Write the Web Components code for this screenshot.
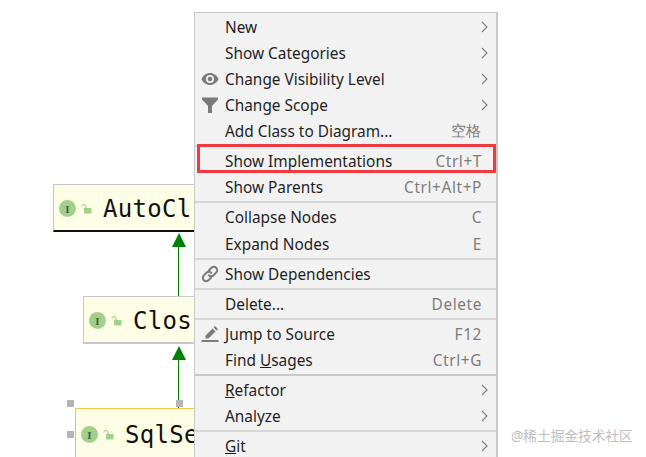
<!DOCTYPE html>
<html>
<head>
<meta charset="utf-8">
<style>
    html, body { margin: 0; padding: 0; background: #fff; }
    body { width: 646px; height: 457px; overflow: hidden; position: relative; }
</style>
</head>
<body>
<uml-diagram>
    <uml-node style="left:53px;top:184px;width:150px;height:48px" label="AutoCl" kind="top"></uml-node>
    <uml-arrow style="left:171px;top:233px;height:63px"></uml-arrow>
    <uml-node style="left:83px;top:296px;width:120px;height:48px" label="Clos"></uml-node>
    <uml-arrow style="left:171px;top:346px;height:62px"></uml-arrow>
    <uml-node style="left:75px;top:408px;width:130px;height:52px" label="SqlSe" kind="selected"></uml-node>
    <span class="handle" style="left:67px;top:400px"></span>
    <span class="handle" style="left:176px;top:400px"></span>
    <span class="handle" style="left:67px;top:431px"></span>
</uml-diagram>

<context-menu>
    <menu-item text="New" arrow></menu-item>
    <menu-item text="Show Categories" arrow></menu-item>
    <menu-item text="Change Visibility Level" icon="eye" arrow></menu-item>
    <menu-item text="Change Scope" icon="filter" arrow></menu-item>
    <menu-item text="Add Class to Diagram..." keys="空格"></menu-item>
    <menu-sep></menu-sep>
    <menu-item text="Show Implementations" keys="Ctrl+T" marked></menu-item>
    <menu-item text="Show Parents" keys="Ctrl+Alt+P"></menu-item>
    <menu-sep></menu-sep>
    <menu-item text="Collapse Nodes" keys="C" style="height:27px"></menu-item>
    <menu-item text="Expand Nodes" keys="E"></menu-item>
    <menu-sep></menu-sep>
    <menu-item text="Show Dependencies" icon="link"></menu-item>
    <menu-sep></menu-sep>
    <menu-item text="Delete..." keys="Delete"></menu-item>
    <menu-sep></menu-sep>
    <menu-item text="Jump to Source" icon="pencil" keys="F12"></menu-item>
    <menu-item keys="Ctrl+G">Find <u>U</u>sages</menu-item>
    <menu-sep style="background:#c8c8c8"></menu-sep>
    <menu-item arrow><u>R</u>efactor</menu-item>
    <menu-item text="Analyze" arrow></menu-item>
    <menu-sep></menu-sep>
    <menu-item arrow><u>G</u>it</menu-item>
</context-menu>

<water-mark>@稀土掘金技术社区</water-mark>

<script>
const ICONS = {
    eye: `<path fill-rule="evenodd" d="M9 3C5.100 3 1.900 5.400.5 9c1.400 3.600 4.600 6 8.500 6s7.100-2.400 8.500-6C16.100 5.400 12.900 3 9 3zm0 10a4 4 0 1 1 0-8 4 4 0 0 1 0 8z"/><circle cx="9" cy="9" r="2.300"/>`,
    filter: `<path d="M1 1.500h16v2L11 10v7H7v-7L1 3.500z"/>`,
    link: `<g fill="none" stroke="currentColor" stroke-width="2" stroke-linecap="round"><path d="M7.800 5.500 10.500 2.800a3.300 3.300 0 0 1 4.700 4.700L12.500 10.200a3.300 3.300 0 0 1-4.700 0"/><path d="M10.200 12.500 7.500 15.200a3.300 3.300 0 0 1-4.700-4.700L5.500 7.800a3.300 3.300 0 0 1 4.700 0"/></g>`,
    pencil: `<path d="M4.500 10.500 11.500 3.500l3 3L7.500 13.500h-3zM12.500 2.500l1.500-1.500 3 3-1.500 1.500z"/><rect x="0.500" y="15" width="17" height="2"/>`
};

customElements.define('uml-diagram', class UmlDiagram extends HTMLElement {
    constructor() {
        super();
        this.attachShadow({ mode: "open" });
        this.shadowRoot.innerHTML = `
            <style>
                :host { display: block; position: absolute; inset: 0; }
                ::slotted(.handle) { position: absolute; width: 7px; height: 7px; background: #b4b4b4; }
            </style>
            <slot></slot>
        `;
    }
});

customElements.define('uml-node', class UmlNode extends HTMLElement {
    constructor() {
        super();
        this.attachShadow({ mode: "open" });
    }

    connectedCallback() {
        const label = this.getAttribute('label');
        this.shadowRoot.innerHTML = `
            <style>
                :host {
                    display: flex;
                    position: absolute;
                    box-sizing: border-box;
                    align-items: center;
                    gap: 6px;
                    padding: 2px 0 0 5px;
                    background: #fefee6;
                    border: 1px solid #c8c8c8;
                    border-width: 1px 2px 2px 1px;
                    overflow: hidden;
                    font: 24px "DejaVu Sans Mono", monospace;
                    letter-spacing: .3px;
                    color: #111;
                }
                :host([kind="top"]) { border-bottom: 2px solid #111; }
                :host([kind="selected"]) { border: 1px solid #e8c84a; border-bottom: 0; padding-top: 0; }
                .badge {
                    display: flex;
                    flex: none;
                    align-items: center;
                    justify-content: center;
                    width: 17px;
                    height: 17px;
                    border-radius: 50%;
                    background: #a3cf8c;
                    color: #3f5f35;
                    font: bold 11px "Liberation Serif", serif;
                    letter-spacing: 0;
                }
                svg { flex: none; margin-left: -1px; }
                .label { white-space: nowrap; margin-left: 5px; }
            </style>
            <span class="badge">I</span>
            <svg width="11" height="11" viewBox="0 0 11 11"><path d="M4 5V3a2 2 0 0 0-4 0" transform="translate(1 .5)" fill="none" stroke="#a3cf8c" stroke-width="1.200"/><rect x="3" y="5" width="7.500" height="5.500" fill="#a3cf8c"/></svg>
            <span class="label">${label}</span>
        `;
    }
});

customElements.define('uml-arrow', class UmlArrow extends HTMLElement {
    constructor() {
        super();
        this.attachShadow({ mode: "open" });
        this.shadowRoot.innerHTML = `
            <style>
                :host { display: flex; flex-direction: column; align-items: center; position: absolute; width: 15px; }
                .head { width: 0; height: 0; border: 7.500px solid transparent; border-top: 0; border-bottom: 14px solid #008000; }
                .line { flex: 1; width: 1.500px; background: #008000; }
            </style>
            <div class="head"></div>
            <div class="line"></div>
        `;
    }
});

customElements.define('context-menu', class ContextMenu extends HTMLElement {
    constructor() {
        super();
        this.attachShadow({ mode: "open" });
        this.shadowRoot.innerHTML = `
            <style>
                :host {
                    display: flex;
                    flex-direction: column;
                    position: absolute;
                    box-sizing: border-box;
                    left: 194px;
                    top: 12px;
                    width: 304px;
                    height: 445px;
                    padding-top: 1px;
                    overflow: hidden;
                    background: #f2f2f2;
                    border: 1px solid #c9c9c9;
                    border-width: 1px 2px 0 1px;
                    font: 15.400px "Noto Sans", sans-serif;
                    color: #1f1f1f;
                }
            </style>
            <slot></slot>
        `;
    }
});

customElements.define('menu-sep', class MenuSep extends HTMLElement {
    constructor() {
        super();
        this.attachShadow({ mode: "open" });
        this.shadowRoot.innerHTML = `
            <style>
                :host { display: block; flex: none; height: 2px; margin: 1px 0; background: #d6d6d6; }
            </style>
        `;
    }
});

customElements.define('menu-item', class MenuItem extends HTMLElement {
    constructor() {
        super();
        this.attachShadow({ mode: "open" });
    }

    connectedCallback() {
        const icon = this.getAttribute('icon');
        const text = this.getAttribute('text');
        const keys = this.getAttribute('keys');
        this.shadowRoot.innerHTML = `
            <style>
                :host {
                    display: grid;
                    flex: none;
                    grid-template-columns: 30px 1fr auto;
                    align-items: center;
                    position: relative;
                    height: 26px;
                    padding-right: 15px;
                    white-space: nowrap;
                }
                .icon { display: flex; justify-content: center; color: #7b7b7b; }
                .keys { color: #7c7c7c; letter-spacing: .6px; margin-right: -1px; }
                svg { display: block; }
                .arrow { margin-right: -9px; }
                :host([marked])::after {
                    content: "";
                    position: absolute;
                    left: 2px;
                    right: 0;
                    top: -4px;
                    bottom: 1px;
                    border: 3px solid #ee3a40;
                }
            </style>
            <span class="icon">${icon ? `<svg width="18" height="18" viewBox="0 0 18 18" fill="currentColor">${ICONS[icon]}</svg>` : ''}</span>
            <span>${text || '<slot></slot>'}</span>
            ${keys ? `<span class="keys">${keys}</span>` : ''}
            ${this.hasAttribute('arrow') ? `<svg class="arrow" width="7" height="12" viewBox="0 0 7 12"><path d="M1 1l5 5-5 5" fill="none" stroke="#7c7c7c" stroke-width="1.100"/></svg>` : ''}
        `;
    }
});

customElements.define('water-mark', class WaterMark extends HTMLElement {
    constructor() {
        super();
        this.attachShadow({ mode: "open" });
        this.shadowRoot.innerHTML = `
            <style>
                :host {
                    display: block;
                    position: absolute;
                    left: 511px;
                    top: 425px;
                    font: 13.700px "Noto Sans", "Noto Sans CJK SC", sans-serif;
                    color: #bdbdbd;
                    white-space: nowrap;
                }
            </style>
            <slot></slot>
        `;
    }
});
</script>
</body>
</html>
